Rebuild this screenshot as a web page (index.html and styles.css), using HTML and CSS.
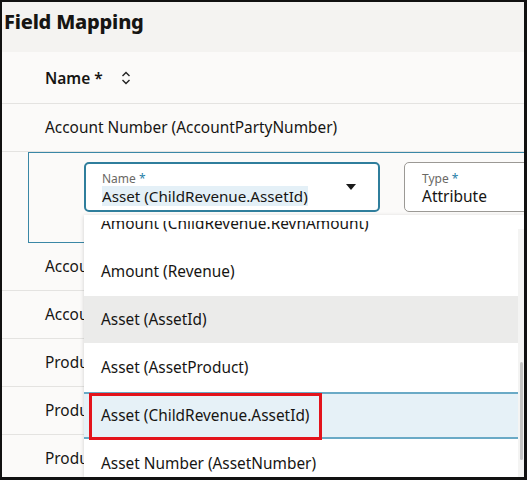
FILE: index.html
```html
<!DOCTYPE html>
<html>
<head>
<meta charset="utf-8">
<link rel="stylesheet" href="styles.css">
</head>
<body>
<div class="frame">
  <div class="title">Field Mapping</div>
  <div class="table">
    <div class="head-row">
      <span class="head-label">Name *</span>
      <svg class="sort" width="10" height="14" viewBox="0 0 10 14"><path d="M1.5 5 L5 1.5 L8.5 5 M1.5 9 L5 12.5 L8.5 9" fill="none" stroke="#222" stroke-width="1.4"/></svg>
    </div>
    <div class="row">Account Number (AccountPartyNumber)</div>
    <div class="edit-row">
      <div class="field field-name">
        <div class="field-label">Name <span class="req">*</span></div>
        <div class="field-value"><span class="sel">Asset (ChildRevenue.AssetId)</span></div>
        <svg class="caret" width="10" height="6" viewBox="0 0 10 6"><path d="M0 0 H10 L5 6 Z" fill="#1a1a1a"/></svg>
      </div>
      <div class="field field-type">
        <div class="field-label">Type <span class="req">*</span></div>
        <div class="field-value">Attribute</div>
      </div>
    </div>
    <div class="row">Account Number</div>
    <div class="row">Account Name</div>
    <div class="row">Product</div>
    <div class="row">Product</div>
    <div class="row">Product</div>
  </div>

  <div class="dropdown">
    <div class="viewport">
      <div class="list">
        <div class="item">Amount (ChildRevenue.RevnAmount)</div>
        <div class="item">Amount (Revenue)</div>
        <div class="item item-hover">Asset (AssetId)</div>
        <div class="item">Asset (AssetProduct)</div>
        <div class="item item-selected">Asset (ChildRevenue.AssetId)</div>
        <div class="item">Asset Number (AssetNumber)</div>
      </div>
    </div>
    <div class="scrolltrack"><div class="scrollthumb"></div></div>
  </div>

  <div class="highlight-box"></div>
</div>
</body>
</html>
```

FILE: styles.css
```css
html, body {
  margin: 0;
  padding: 0;
  background: #ffffff;
}

.frame {
  position: relative;
  width: 527px;
  height: 480px;
  box-sizing: border-box;
  border: 2px solid #111111;
  border-right-width: 3px;
  border-bottom-width: 3px;
  overflow: hidden;
  font-family: "Noto Sans", "Open Sans", sans-serif;
  color: #161513;
  background: #fbfaf9;
}

.title {
  height: 50px;
  background: #f4f3f1;
  font-weight: 800;
  font-size: 20px;
  line-height: 40px;
  padding-left: 2px;
  letter-spacing: -0.2px;
}

.table {
  background: #fbfaf9;
}

.head-row {
  height: 51px;
  border-bottom: 1px solid #e4e3e1;
  display: flex;
  align-items: center;
  padding-left: 43px;
  gap: 18px;
}

.head-label {
  font-size: 15.5px;
  font-weight: 600;
}

.sort {
  display: block;
}

.row {
  height: 47px;
  border-bottom: 1px solid #e4e3e1;
  display: flex;
  align-items: center;
  padding-left: 43px;
  font-size: 15.4px;
  white-space: nowrap;
}

.edit-row {
  height: 80px;
  margin-left: 26px;
  border: 1px solid #3a87a6;
  border-right: none;
  display: flex;
  align-items: flex-start;
  padding-top: 9px;
  padding-left: 55px;
  gap: 24px;
  background: #fbfaf9;
}

.field {
  position: relative;
  height: 50px;
  box-sizing: border-box;
  border-radius: 5px;
  background: #ffffff;
  padding: 8px 0 0 16px;
  flex: none;
}

.field-name {
  width: 296px;
  border: 2px solid #2f7e9c;
}

.field-type {
  width: 140px;
  border: 1px solid #9b9995;
  padding-left: 17px;
  padding-top: 9px;
}

.field-label {
  font-size: 12px;
  line-height: 14px;
  color: #6a6864;
}

.req {
  color: #2a7fa8;
}

.field-value {
  font-size: 15.2px;
  line-height: 20px;
  color: #161513;
  white-space: nowrap;
}

.field-type .field-value {
  font-size: 15.5px;
}

.sel {
  background: #e4f0f7;
}

.caret {
  position: absolute;
  right: 22px;
  top: 20px;
}

.dropdown {
  position: absolute;
  left: 82px;
  top: 213px;
  width: 440px;
  bottom: 0;
  padding-top: 6px;
  box-sizing: border-box;
  background: #ffffff;
  box-shadow: 0 1px 4px rgba(0, 0, 0, 0.18);
}

.viewport {
  height: 100%;
  overflow: hidden;
  margin-right: 6px;
}

.list {
  margin-top: -21px;
}

.item {
  height: 47px;
  display: flex;
  align-items: center;
  padding-left: 17px;
  font-size: 15.4px;
  white-space: nowrap;
  box-sizing: border-box;
}

.item + .item {
  margin-top: 1px;
}

.item-hover {
  background: #ebebea;
}

.item-selected {
  background: #e6f1f7;
  border-top: 2px solid #6aaac6;
  border-bottom: 2px solid #6aaac6;
}

.scrolltrack {
  position: absolute;
  right: 0;
  top: 14px;
  bottom: 0;
  width: 6px;
  background: #f4f4f3;
}

.scrollthumb {
  position: absolute;
  left: 2px;
  width: 3px;
  top: 133px;
  height: 98px;
  background: #c4c4c4;
  border-radius: 2px;
}

.highlight-box {
  position: absolute;
  left: 87px;
  top: 391px;
  width: 233px;
  height: 47px;
  box-sizing: border-box;
  border: 3px solid #e3131b;
}
```
